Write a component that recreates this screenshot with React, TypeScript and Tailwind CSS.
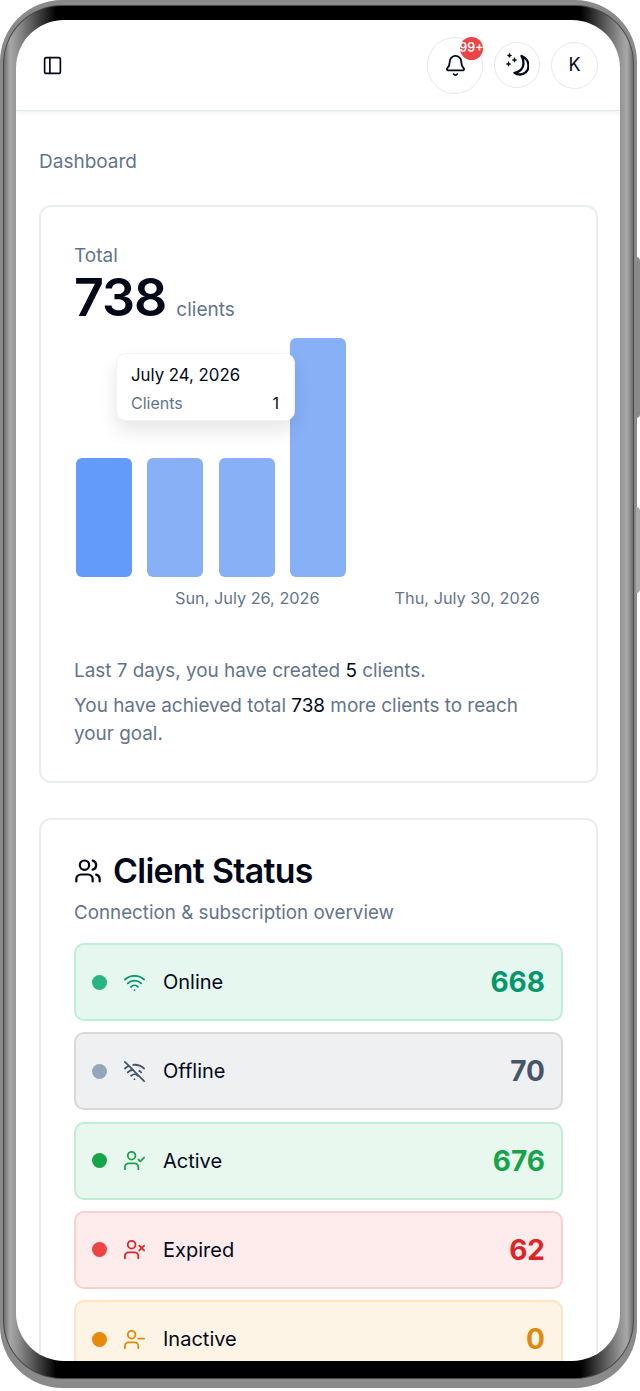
import React from "react";
import { Bell, PanelLeft, UserCheck, UserMinus, UserX, Users, Wifi, WifiOff } from "lucide-react";

const bars = [
  { height: "h-[119px]", color: "bg-[#639bfa]" },
  { height: "h-[119px]", color: "bg-[#87b0f7]" },
  { height: "h-[119px]", color: "bg-[#87b0f7]" },
  { height: "h-[239px]", color: "bg-[#87b0f7]" },
];

const statuses = [
  { label: "Online", value: 668, Icon: Wifi, row: "bg-[#e6f7f0] border-[#bdeeda]", dot: "bg-[#27b584]", text: "text-[#059669]" },
  { label: "Offline", value: 70, Icon: WifiOff, row: "bg-[#eff0f2] border-[#d6d8da]", dot: "bg-[#94a6bc]", text: "text-[#475569]" },
  { label: "Active", value: 676, Icon: UserCheck, row: "bg-[#e8f8ee] border-[#c0eed1]", dot: "bg-[#16a34a]", text: "text-[#16a34a]" },
  { label: "Expired", value: 62, Icon: UserX, row: "bg-[#feecec] border-[#fbcfcf]", dot: "bg-[#ef4444]", text: "text-[#dc2626]" },
  { label: "Inactive", value: 0, Icon: UserMinus, row: "bg-[#fdf4e6] border-[#fbe5c4]", dot: "bg-[#e8890c]", text: "text-[#e08a0b]" },
];

function MoonStars() {
  return (
    <svg viewBox="0 0 24 24" className="h-[24px] w-[24px]" fill="none" stroke="currentColor" strokeWidth="2.3" strokeLinecap="round" strokeLinejoin="round">
      <path d="M16.500 3C21 5 23.500 9 23.500 13C23.500 18 19.500 21.500 15 21.500C13 21.500 11 21 9.500 19.800C14.500 19.500 18.500 15.500 18.500 10.500C18.500 8 17.800 5 16.500 3Z" />
      <path d="M4.500 0.200L5.200 1.800L6.800 2.500L5.200 3.200L4.500 4.800L3.800 3.200L2.200 2.500L3.800 1.800Z" fill="currentColor" strokeWidth="0.5" />
      <path d="M9.500 4.700L10.200 6.300L11.800 7L10.200 7.700L9.500 9.300L8.800 7.700L7.200 7L8.800 6.300Z" fill="currentColor" strokeWidth="0.5" />
      <path d="M3.500 8.700L4.200 10.300L5.800 11L4.200 11.700L3.500 13.300L2.800 11.700L1.200 11L2.800 10.300Z" fill="currentColor" strokeWidth="0.5" />
    </svg>
  );
}

function RoundButton({ size, children }: { size: string; children: React.ReactNode }) {
  return (
    <div className={`${size} relative flex items-center justify-center rounded-full border border-[#e2e8f0] bg-white text-[#020817]`}>
      {children}
    </div>
  );
}

export default function App() {
  return (
    <div className="relative h-[1391px] w-[640px] overflow-hidden bg-white font-['Inter',sans-serif]">
      {/* side buttons */}
      <div className="absolute right-0 top-[257px] h-[161px] w-[4px] rounded-r-sm bg-[#8a8a8a]" />
      <div className="absolute right-0 top-[507px] h-[86px] w-[4px] rounded-r-sm bg-[#a8a8a8]" />

      {/* phone frame */}
      <div className="mr-[3px] h-[1388px] rounded-[62px] bg-[#8a8a8a] px-[3px] pb-[9px] pt-[5px]">
        <div className="h-full rounded-[59px] bg-[#484848] p-[1px]">
          <div className="h-full rounded-[58px] bg-[linear-gradient(to_right,#6e6e6e_0,#a8a8a8_6px,#969696_12px,#6a6a6a_24px,#000000_52px,#000000_calc(100%-52px),#6a6a6a_calc(100%-24px),#969696_calc(100%-12px),#a8a8a8_calc(100%-6px),#6e6e6e_100%)] pb-[17px] pl-[12px] pr-[13px] pt-[14px]">
            <div className="h-full overflow-hidden rounded-[48px] bg-white">
              <header className="flex h-[91px] items-center justify-between border-b border-[#e2e8f0] pl-[26px] pr-[22px] shadow-[0_2px_4px_rgba(15,23,42,0.06)]">
                <PanelLeft className="h-[21px] w-[21px] text-[#020817]" strokeWidth={1.9} />
                <div className="flex items-center gap-[11px]">
                  <RoundButton size="h-[57px] w-[56px]">
                    <Bell className="h-[23px] w-[23px]" strokeWidth={1.9} />
                    <span className="absolute -right-[1px] -top-[1px] flex h-[23px] w-[23px] items-center justify-center rounded-full bg-[#ef4444] text-[12.500px] font-semibold text-white">
                      99+
                    </span>
                  </RoundButton>
                  <RoundButton size="h-[46px] w-[46px]">
                    <MoonStars />
                  </RoundButton>
                  <RoundButton size="h-[47px] w-[47px]">
                    <span className="text-[18px] leading-none">K</span>
                  </RoundButton>
                </div>
              </header>

              <main className="pl-[23px] pr-[22px] pt-[39px]">
                <p className="text-[19px] leading-[24px] text-[#64748b]">Dashboard</p>

                <section className="mt-[31px] h-[578px] rounded-[12px] border-2 border-[#e9edf3] px-[33px] pt-[37px]">
                  <p className="text-[19px] leading-[24px] text-[#64748b]">Total</p>
                  <div className="mt-[4px] flex items-baseline gap-[10px]">
                    <span className="text-[52px] font-semibold leading-[52px] tracking-[-0.02em] text-[#020817]">738</span>
                    <span className="text-[19px] text-[#64748b]">clients</span>
                  </div>

                  <div className="relative mt-[13px] flex h-[239px] items-end gap-[15.300px] pl-[2px]">
                    {bars.map((bar, i) => (
                      <div key={i} className={`w-[56px] rounded-[6px] ${bar.height} ${bar.color}`} />
                    ))}
                    <div className="absolute left-[42px] top-[15px] h-[68px] w-[179px] rounded-[10px] border border-[#f1f3f6] bg-white pl-[14px] pr-[15px] pt-[9px] shadow-[0_10px_18px_rgba(15,23,42,0.1)]">
                      <p className="text-[16.800px] leading-[24px] text-[#020817]">July 24, 2026</p>
                      <div className="mt-[5px] flex items-center justify-between text-[16px] leading-[22px]">
                        <span className="text-[#64748b]">Clients</span>
                        <span className="text-[#020817]">1</span>
                      </div>
                    </div>
                  </div>

                  <div className="mt-[9px] flex pl-[101px] text-[16.300px] leading-[24px] text-[#64748b]">
                    <span>Sun, July 26, 2026</span>
                    <span className="ml-[75px]">Thu, July 30, 2026</span>
                  </div>

                  <div className="mt-[47px] max-w-[470px] text-[18.900px] leading-[28px] text-[#64748b]">
                    <p>
                      Last 7 days, you have created <span className="text-[#020817]">5</span> clients.
                    </p>
                    <p className="mt-[7px]">
                      You have achieved total <span className="text-[#020817]">738</span> more clients to reach your goal.
                    </p>
                  </div>
                </section>

                <section className="mt-[35px] h-[600px] rounded-[12px] border-2 border-[#e9edf3] px-[33px] pt-[31px]">
                  <div className="flex items-center gap-[11px]">
                    <Users className="h-[28px] w-[28px] text-[#020817]" strokeWidth={1.9} />
                    <h2 className="text-[33.800px] font-semibold leading-[40px] tracking-[-0.02em] text-[#020817]">Client Status</h2>
                  </div>
                  <p className="mt-[10px] text-[18.800px] leading-[24px] text-[#64748b]">Connection &amp; subscription overview</p>

                  <div className="mt-[18px] flex flex-col gap-[11.300px]">
                    {statuses.map(({ label, value, Icon, row, dot, text }) => (
                      <div key={label} className={`flex h-[78px] shrink-0 items-center rounded-[10px] border-2 pl-[16px] pr-[16px] ${row}`}>
                        <span className={`h-[15px] w-[15px] rounded-full ${dot}`} />
                        <Icon className={`ml-[16px] h-[23px] w-[23px] ${text}`} strokeWidth={1.9} />
                        <span className="ml-[17px] text-[20px] text-[#020817]">{label}</span>
                        <span className={`ml-auto text-[28px] font-bold leading-none ${text}`}>{value}</span>
                      </div>
                    ))}
                  </div>
                </section>
              </main>
            </div>
          </div>
        </div>
      </div>
    </div>
  );
}
